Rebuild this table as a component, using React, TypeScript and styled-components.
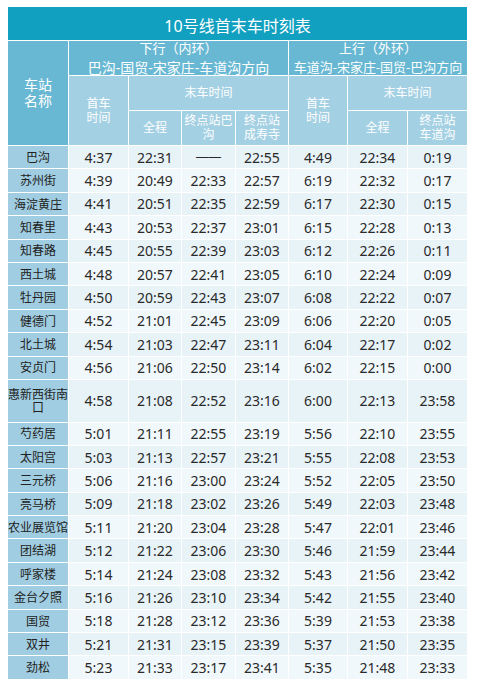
import React from "react";
import styled, { createGlobalStyle } from "styled-components";

const GlobalStyle = createGlobalStyle`
  html, body {
    margin: 0;
    padding: 0;
    background: #ffffff;
  }
  body {
    font-family: "Noto Sans", "Noto Sans CJK SC", sans-serif;
  }
`;

const COLS = "60px 59px 52px 53px 52px 58px 59px 59px";

const Page = styled.div`
  padding: 7px 0 0 8px;
`;

const Timetable = styled.div`
  width: 459px;
  display: flex;
  flex-direction: column;
  gap: 1px;
  background: #ffffff;
`;

const Title = styled.div`
  height: 33px;
  background: #12a0c1;
  color: #ffffff;
  font-family: "Noto Sans", "Noto Sans CJK SC", sans-serif;
  font-size: 16px;
  display: flex;
  align-items: center;
  justify-content: center;
  padding-top: 2px;
  box-sizing: border-box;
`;

const HeaderGrid = styled.div`
  display: grid;
  grid-template-columns: ${COLS};
  grid-template-rows: 34px 34px 34px;
  gap: 1px;
`;

const HeadCell = styled.div<{
  $cols?: number;
  $rows?: number;
  $tone: "dark" | "light";
  $size?: number;
  $lh?: number;
}>`
  grid-column: span ${(p) => p.$cols ?? 1};
  grid-row: span ${(p) => p.$rows ?? 1};
  background: ${(p) => (p.$tone === "dark" ? "#68b8d3" : "#a4d0e3")};
  color: #ffffff;
  font-size: ${(p) => p.$size ?? 12}px;
  line-height: ${(p) => p.$lh ?? 14}px;
  display: flex;
  flex-direction: column;
  align-items: center;
  justify-content: center;
  text-align: center;
  white-space: nowrap;
`;

const HeadLine = styled.span<{ $size?: number }>`
  font-size: ${(p) => (p.$size ? `${p.$size}px` : "inherit")};
`;

const Row = styled.div<{ $tall?: boolean }>`
  display: grid;
  grid-template-columns: ${COLS};
  gap: 1px;
  height: ${(p) => (p.$tall ? 41.6 : 22.4)}px;
`;

const Station = styled.div`
  background: #a0cde1;
  color: #222222;
  font-size: 12px;
  line-height: 13.6px;
  display: flex;
  align-items: center;
  justify-content: center;
  text-align: center;
  padding-top: 1px;
  box-sizing: border-box;
`;

const Cell = styled.div<{ $alt: boolean }>`
  background: ${(p) => (p.$alt ? "#f1f8fb" : "#e8f3f8")};
  color: #2a2a2a;
  font-size: 14px;
  display: flex;
  align-items: center;
  justify-content: center;
`;

const Dash = styled.span`
  font-family: "Liberation Sans", sans-serif;
  font-size: 12.5px;
  letter-spacing: 0;
`;

type Entry = [string, string, string, string, string, string, string, string];

const rows: Entry[] = [
  ["巴沟", "4:37", "22:31", "——", "22:55", "4:49", "22:34", "0:19"],
  ["苏州街", "4:39", "20:49", "22:33", "22:57", "6:19", "22:32", "0:17"],
  ["海淀黄庄", "4:41", "20:51", "22:35", "22:59", "6:17", "22:30", "0:15"],
  ["知春里", "4:43", "20:53", "22:37", "23:01", "6:15", "22:28", "0:13"],
  ["知春路", "4:45", "20:55", "22:39", "23:03", "6:12", "22:26", "0:11"],
  ["西土城", "4:48", "20:57", "22:41", "23:05", "6:10", "22:24", "0:09"],
  ["牡丹园", "4:50", "20:59", "22:43", "23:07", "6:08", "22:22", "0:07"],
  ["健德门", "4:52", "21:01", "22:45", "23:09", "6:06", "22:20", "0:05"],
  ["北土城", "4:54", "21:03", "22:47", "23:11", "6:04", "22:17", "0:02"],
  ["安贞门", "4:56", "21:06", "22:50", "23:14", "6:02", "22:15", "0:00"],
  ["惠新西街南口", "4:58", "21:08", "22:52", "23:16", "6:00", "22:13", "23:58"],
  ["芍药居", "5:01", "21:11", "22:55", "23:19", "5:56", "22:10", "23:55"],
  ["太阳宫", "5:03", "21:13", "22:57", "23:21", "5:55", "22:08", "23:53"],
  ["三元桥", "5:06", "21:16", "23:00", "23:24", "5:52", "22:05", "23:50"],
  ["亮马桥", "5:09", "21:18", "23:02", "23:26", "5:49", "22:03", "23:48"],
  ["农业展览馆", "5:11", "21:20", "23:04", "23:28", "5:47", "22:01", "23:46"],
  ["团结湖", "5:12", "21:22", "23:06", "23:30", "5:46", "21:59", "23:44"],
  ["呼家楼", "5:14", "21:24", "23:08", "23:32", "5:43", "21:56", "23:42"],
  ["金台夕照", "5:16", "21:26", "23:10", "23:34", "5:42", "21:55", "23:40"],
  ["国贸", "5:18", "21:28", "23:12", "23:36", "5:39", "21:53", "23:38"],
  ["双井", "5:21", "21:31", "23:15", "23:39", "5:37", "21:50", "23:35"],
  ["劲松", "5:23", "21:33", "23:17", "23:41", "5:35", "21:48", "23:33"],
];

export default function App() {
  return (
    <Page>
      <GlobalStyle />
      <Timetable>
        <Title>10号线首末车时刻表</Title>
        <HeaderGrid>
          <HeadCell $rows={3} $tone="dark" $size={14} $lh={16.5}>
            <span>车站</span>
            <span>名称</span>
          </HeadCell>
          <HeadCell $cols={4} $tone="dark" $size={13} $lh={19}>
            <HeadLine>下行（内环）</HeadLine>
            <HeadLine $size={14}>巴沟-国贸-宋家庄-车道沟方向</HeadLine>
          </HeadCell>
          <HeadCell $cols={3} $tone="dark" $size={13} $lh={19}>
            <HeadLine>上行（外环）</HeadLine>
            <HeadLine>车道沟-宋家庄-国贸-巴沟方向</HeadLine>
          </HeadCell>
          <HeadCell $rows={2} $tone="light">
            <span>首车</span>
            <span>时间</span>
          </HeadCell>
          <HeadCell $cols={3} $tone="light">
            末车时间
          </HeadCell>
          <HeadCell $rows={2} $tone="light">
            <span>首车</span>
            <span>时间</span>
          </HeadCell>
          <HeadCell $cols={2} $tone="light">
            末车时间
          </HeadCell>
          <HeadCell $tone="light">全程</HeadCell>
          <HeadCell $tone="light">
            <span>终点站巴</span>
            <span>沟</span>
          </HeadCell>
          <HeadCell $tone="light">
            <span>终点站</span>
            <span>成寿寺</span>
          </HeadCell>
          <HeadCell $tone="light">全程</HeadCell>
          <HeadCell $tone="light">
            <span>终点站</span>
            <span>车道沟</span>
          </HeadCell>
        </HeaderGrid>
        {rows.map((r, i) => {
          const [name, ...times] = r;
          const tall = name.length > 5;
          return (
            <Row key={name} $tall={tall}>
              <Station>{name}</Station>
              {times.map((t, j) => (
                <Cell key={j} $alt={i % 2 === 1}>
                  {t === "——" ? <Dash>{t}</Dash> : t}
                </Cell>
              ))}
            </Row>
          );
        })}
      </Timetable>
    </Page>
  );
}
